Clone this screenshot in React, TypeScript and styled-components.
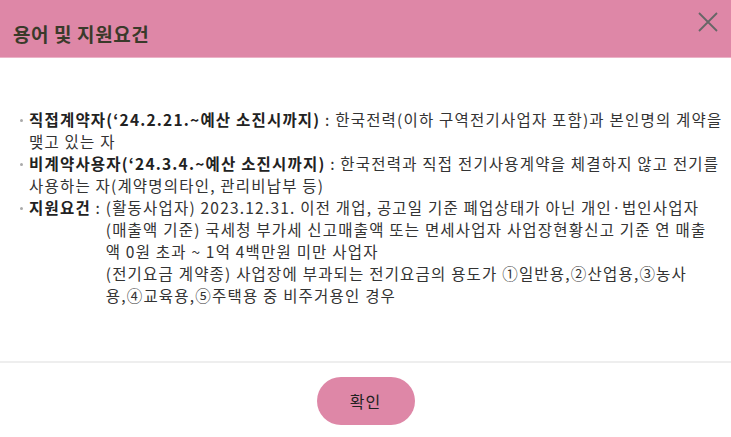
import * as React from 'react'
import styled, { createGlobalStyle } from 'styled-components'

const GlobalStyle = createGlobalStyle`
  html, body {
    margin: 0;
    padding: 0;
    background: #fff;
  }
  body {
    font-family: "Noto Sans CJK KR", "Noto Sans", sans-serif;
    color: #333;
  }
  * {
    box-sizing: border-box;
  }
`

const Modal = styled.div`
  width: 731px;
  height: 437px;
  display: flex;
  flex-direction: column;
  background: #fff;
`

const Header = styled.div`
  height: 58px;
  flex: none;
  display: flex;
  align-items: flex-start;
  justify-content: space-between;
  padding: 0 8px 0 13px;
  background: #de87a7;
  border-bottom: 1px solid #ebb3c7;
`

const Title = styled.h2`
  margin: 20px 0 0;
  font-size: 19px;
  line-height: 28px;
  font-weight: 700;
  color: #3a3a2a;
  letter-spacing: 0.6px;
`

const CloseButton = styled.button`
  width: 30px;
  height: 30px;
  margin-top: 7px;
  padding: 0;
  border: 0;
  background: none;
  display: flex;
  align-items: center;
  justify-content: center;
  cursor: pointer;
`

const Body = styled.div`
  flex: 1;
  padding: 50px 4px 0 18px;
`

const List = styled.ul`
  margin: 0;
  padding: 0;
  list-style: none;
  font-size: 15.5px;
  line-height: 22px;
  color: #333;
  letter-spacing: 1.2px;
`

const Item = styled.li`
  position: relative;
  padding-left: 11px;

  &::before {
    content: '';
    position: absolute;
    left: 2px;
    top: 11px;
    width: 3px;
    height: 3px;
    border-radius: 50%;
    background: #aaa;
  }
`

const Term = styled.strong`
  font-weight: 700;
  color: #222;
`

const Split = styled.div`
  display: flex;
`

const Label = styled.span`
  flex: none;
  white-space: pre;
`

const Details = styled.div`
  flex: 1;
  white-space: nowrap;
`

const Line = styled.p`
  margin: 0;
`

const Footer = styled.div`
  flex: none;
  height: 76px;
  border-top: 2px solid #eeeeee;
  display: flex;
  justify-content: center;
  padding-top: 14px;
`

const ConfirmButton = styled.button`
  width: 98px;
  height: 48px;
  border: 0;
  border-radius: 24px;
  background: #de87a7;
  color: #222;
  font-family: inherit;
  font-size: 16px;
  letter-spacing: 1px;
  cursor: pointer;
`

export default function App() {
  return (
    <>
      <GlobalStyle />
      <Modal>
        <Header>
          <Title>용어 및 지원요건</Title>
          <CloseButton aria-label="닫기">
            <svg width="22" height="22" viewBox="0 0 22 22">
              <path d="M2 2L20 20M20 2L2 20" stroke="#666" strokeWidth="1.8" fill="none" />
            </svg>
          </CloseButton>
        </Header>
        <Body>
          <List>
            <Item>
              <Term>직접계약자(‘24.2.21.~예산 소진시까지)</Term> : 한국전력(이하 구역전기사업자 포함)과 본인명의 계약을
              <br />
              맺고 있는 자
            </Item>
            <Item>
              <Term>비계약사용자(‘24.3.4.~예산 소진시까지)</Term> : 한국전력과 직접 전기사용계약을 체결하지 않고 전기를
              <br />
              사용하는 자(계약명의타인, 관리비납부 등)
            </Item>
            <Item>
              <Split>
                <Label>
                  <Term>지원요건</Term> :{' '}
                </Label>
                <Details>
                  <Line>(활동사업자) 2023.12.31. 이전 개업, 공고일 기준 폐업상태가 아닌 개인·법인사업자</Line>
                  <Line>
                    (매출액 기준) 국세청 부가세 신고매출액 또는 면세사업자 사업장현황신고 기준 연 매출
                    <br />액 0원 초과 ~ 1억 4백만원 미만 사업자
                  </Line>
                  <Line>
                    (전기요금 계약종) 사업장에 부과되는 전기요금의 용도가 ①일반용,②산업용,③농사
                    <br />용,④교육용,⑤주택용 중 비주거용인 경우
                  </Line>
                </Details>
              </Split>
            </Item>
          </List>
        </Body>
        <Footer>
          <ConfirmButton>확인</ConfirmButton>
        </Footer>
      </Modal>
    </>
  )
}
